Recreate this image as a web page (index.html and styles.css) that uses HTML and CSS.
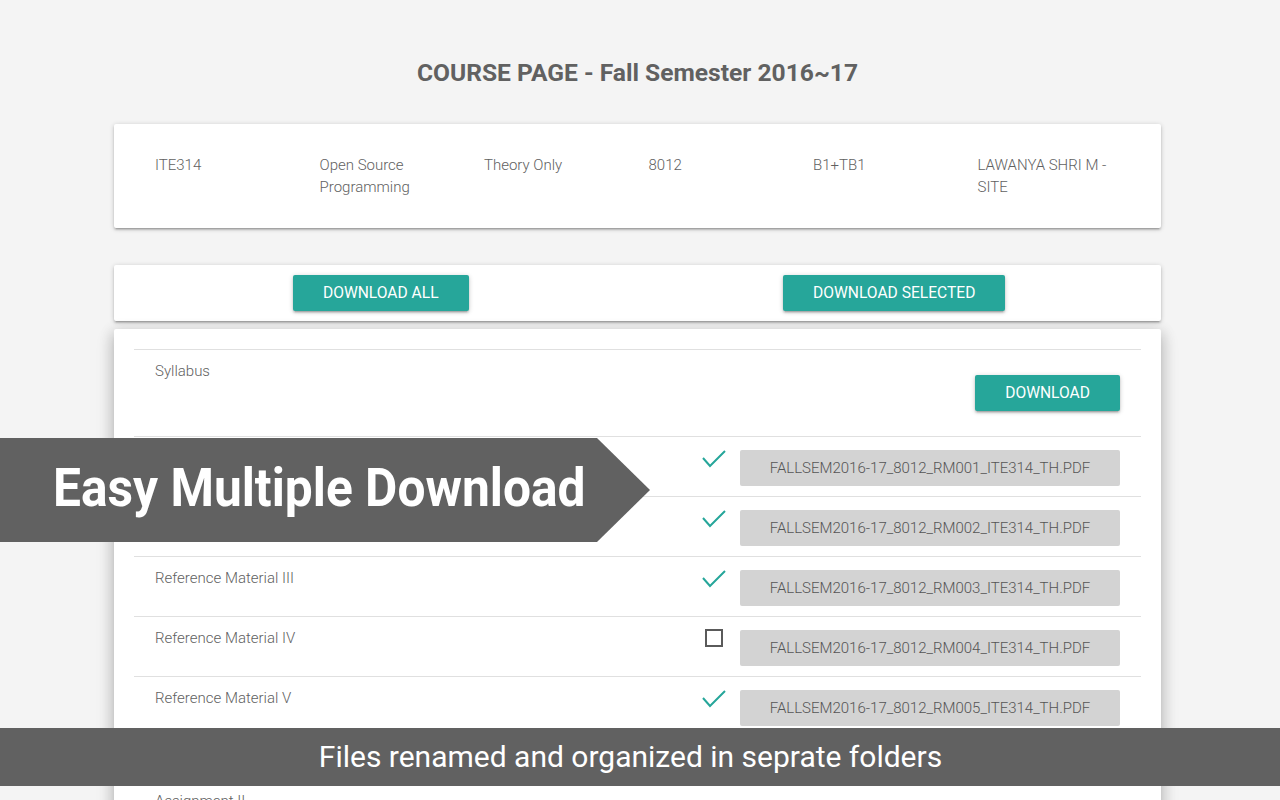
FILE: index.html
```html
<!DOCTYPE html>
<html lang="en">
<head>
<meta charset="utf-8">
<title>Course Page</title>
<link rel="stylesheet" href="styles.css">
</head>
<body>
<main class="page">
  <h1 class="title">COURSE PAGE - Fall Semester 2016~17</h1>

  <section class="card info">
    <div class="info-col">ITE314</div>
    <div class="info-col">Open Source Programming</div>
    <div class="info-col">Theory Only</div>
    <div class="info-col">8012</div>
    <div class="info-col">B1+TB1</div>
    <div class="info-col">LAWANYA SHRI M - SITE</div>
  </section>

  <section class="card actions">
    <div class="action-cell"><button class="btn">DOWNLOAD ALL</button></div>
    <div class="action-cell"><button class="btn">DOWNLOAD SELECTED</button></div>
  </section>

  <section class="card materials">
    <div class="row row-syllabus">
      <div class="label">Syllabus</div>
      <div class="side"><button class="btn">DOWNLOAD</button></div>
    </div>
    <div class="row">
      <div class="label">Reference Material I</div>
      <div class="side">
        <span class="mark"><svg class="check" viewBox="0 0 24 20" width="24" height="20"><polyline points="1,9 8,17 23,2"/></svg></span>
        <span class="file">FALLSEM2016-17_8012_RM001_ITE314_TH.PDF</span>
      </div>
    </div>
    <div class="row">
      <div class="label">Reference Material II</div>
      <div class="side">
        <span class="mark"><svg class="check" viewBox="0 0 24 20" width="24" height="20"><polyline points="1,9 8,17 23,2"/></svg></span>
        <span class="file">FALLSEM2016-17_8012_RM002_ITE314_TH.PDF</span>
      </div>
    </div>
    <div class="row">
      <div class="label">Reference Material III</div>
      <div class="side">
        <span class="mark"><svg class="check" viewBox="0 0 24 20" width="24" height="20"><polyline points="1,9 8,17 23,2"/></svg></span>
        <span class="file">FALLSEM2016-17_8012_RM003_ITE314_TH.PDF</span>
      </div>
    </div>
    <div class="row">
      <div class="label">Reference Material IV</div>
      <div class="side">
        <span class="mark"><span class="box"></span></span>
        <span class="file">FALLSEM2016-17_8012_RM004_ITE314_TH.PDF</span>
      </div>
    </div>
    <div class="row row-tall">
      <div class="label">Reference Material V</div>
      <div class="side">
        <span class="mark"><svg class="check" viewBox="0 0 24 20" width="24" height="20"><polyline points="1,9 8,17 23,2"/></svg></span>
        <span class="file">FALLSEM2016-17_8012_RM005_ITE314_TH.PDF</span>
      </div>
    </div>
    <div class="row row-syllabus">
      <div class="label">Assignment II</div>
      <div class="side"><button class="btn">DOWNLOAD</button></div>
    </div>
  </section>
</main>

<div class="banner-arrow"><span>Easy Multiple Download</span></div>
<div class="banner-bottom"><span>Files renamed and organized in seprate folders</span></div>
</body>
</html>
```

FILE: styles.css
```css
html, body {
  margin: 0;
  padding: 0;
}

body {
  background: #f4f4f4;
  font-family: Roboto, "Liberation Sans", Arial, sans-serif;
  color: #616161;
  height: 800px;
  overflow: hidden;
}

.page {
  width: 1047px;
  margin-left: 114px;
  padding-top: 58px;
}

.title {
  margin: 0;
  font-size: 24.6px;
  line-height: 30px;
  font-weight: 700;
  text-align: center;
  color: #616161;
}

.card {
  background: #fff;
  border-radius: 2px;
  box-shadow: 0 2px 2px 0 rgba(0,0,0,.14), 0 3px 1px -2px rgba(0,0,0,.12), 0 1px 5px 0 rgba(0,0,0,.2);
}

.info {
  margin-top: 36px;
  display: grid;
  grid-template-columns: repeat(6, 1fr);
  padding: 30px 30px 30px;
  font-size: 15px;
  font-weight: 300;
  line-height: 22px;
  color: #616161;
}

.info-col {
  padding: 0 11px;
}

.actions {
  margin-top: 37px;
  display: grid;
  grid-template-columns: 1fr 1fr;
  padding: 10px;
}

.action-cell {
  display: flex;
  justify-content: center;
}

.btn {
  border: none;
  background: #26a69a;
  color: #fff;
  font-family: Roboto, "Liberation Sans", Arial, sans-serif;
  font-size: 15.6px;
  font-weight: 400;
  height: 36px;
  line-height: 36px;
  padding: 0 30px;
  border-radius: 2px;
  box-shadow: 0 2px 2px 0 rgba(0,0,0,.14), 0 3px 1px -2px rgba(0,0,0,.12), 0 1px 5px 0 rgba(0,0,0,.2);
  cursor: pointer;
}

.materials {
  margin-top: 8px;
  padding: 20px 20px 40px;
  box-shadow: 0 8px 17px 2px rgba(0,0,0,.14), 0 3px 14px 2px rgba(0,0,0,.12), 0 5px 5px -3px rgba(0,0,0,.2);
}

.row {
  display: flex;
  justify-content: space-between;
  border-top: 1px solid #e0e0e0;
  height: 59px;
  padding: 0 21px;
}

.row-syllabus {
  height: 86px;
}

.row-tall {
  height: 102px;
}

.label {
  padding-top: 10px;
  font-size: 15px;
  font-weight: 300;
  line-height: 22px;
  color: #616161;
}

.side {
  display: flex;
  align-items: flex-start;
  gap: 14px;
  padding-top: 13px;
}

.row-syllabus .side {
  padding-top: 25px;
}

.mark {
  display: flex;
  justify-content: center;
  width: 24px;
  height: 20px;
  margin-top: -1px;
}

.check polyline {
  fill: none;
  stroke: #26a69a;
  stroke-width: 2;
}

.box {
  width: 14px;
  height: 14px;
  border: 2px solid #5a5a5a;
}

.file {
  display: block;
  width: 380px;
  height: 36px;
  line-height: 36px;
  text-align: center;
  background: #d3d3d3;
  border-radius: 2px;
  font-size: 15px;
  font-weight: 300;
  color: #555;
}

.banner-arrow {
  position: absolute;
  left: 0;
  top: 438px;
  width: 650px;
  height: 104px;
  background: #616161;
  clip-path: polygon(0 0, 597px 0, 650px 52px, 597px 104px, 0 104px);
  display: flex;
  align-items: center;
  padding-left: 53px;
  box-sizing: border-box;
}

.banner-arrow span {
  color: #fff;
  font-size: 54px;
  font-weight: 700;
  line-height: 1;
  margin-top: -4px;
  white-space: nowrap;
  transform: scaleX(0.92);
  transform-origin: left center;
}

.banner-bottom {
  position: absolute;
  left: 0;
  right: 0;
  top: 728px;
  height: 58px;
  background: #616161;
  display: flex;
  align-items: center;
  justify-content: center;
  padding-right: 19px;
}

.banner-bottom span {
  color: #fff;
  font-size: 30px;
  font-weight: 400;
  line-height: 1;
}
```
